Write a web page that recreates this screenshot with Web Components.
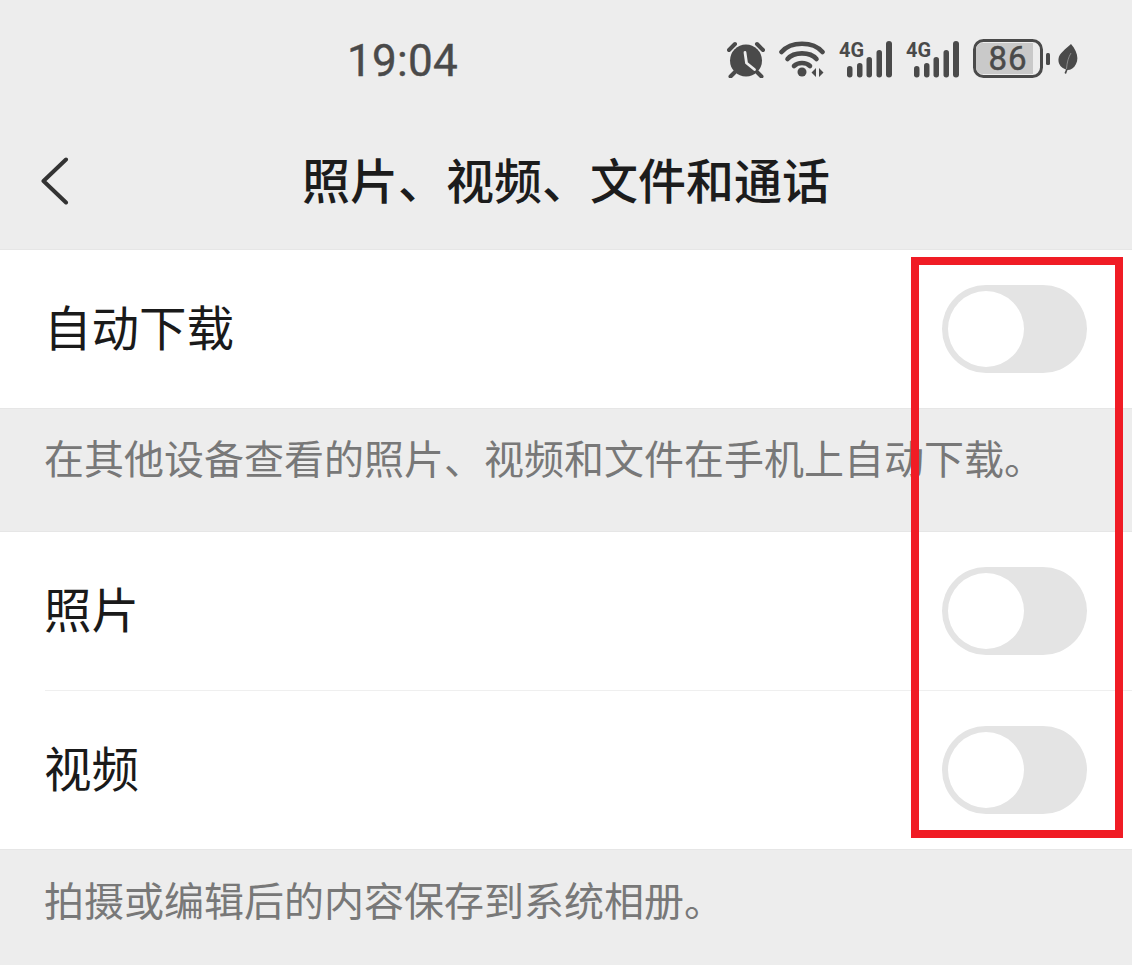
<!DOCTYPE html>
<html lang="zh">
<head>
<meta charset="utf-8">
<title>照片、视频、文件和通话</title>
<style>
  html, body { margin: 0; padding: 0; }
  body {
    width: 1132px; height: 965px; overflow: hidden; position: relative;
    background: #ededed;
    font-family: "Noto Sans CJK SC", "Noto Sans", sans-serif;
  }
  app-screen { display: block; }
</style>
</head>
<body>
<app-screen>
  <status-bar time="19:04"></status-bar>
  <nav-bar>照片、视频、文件和通话</nav-bar>
  <setting-group>
    <setting-row>自动下载</setting-row>
  </setting-group>
  <note-text size="large">在其他设备查看的照片、视频和文件在手机上自动下载。</note-text>
  <setting-group>
    <setting-row divider>照片</setting-row>
    <setting-row>视频</setting-row>
  </setting-group>
  <note-text>拍摄或编辑后的内容保存到系统相册。</note-text>
</app-screen>
<highlight-box></highlight-box>

<script>
function define(name, css, html, extra) {
  class El extends HTMLElement {
    constructor() {
      super();
      const root = this.attachShadow({ mode: 'open' });
      root.innerHTML = '<style>' + css + '</style>' + html;
      if (extra) extra(this, root);
    }
  }
  customElements.define(name, El);
}

const signal = `<svg class="sig" width="53" height="43" viewBox="0 -6 53 43" fill="#4a4a4a">
  <text x="0" y="15.500" font-family="Roboto, sans-serif" font-weight="700" font-size="20" textLength="25" lengthAdjust="spacingAndGlyphs">4G</text>
  <rect x="8" y="25" width="5.500" height="11.500" rx="2.700"/>
  <rect x="18" y="22" width="5.500" height="14.500" rx="2.700"/>
  <rect x="27.500" y="16" width="5.500" height="20.500" rx="2.700"/>
  <rect x="37.500" y="9" width="5.500" height="27.500" rx="2.700"/>
  <rect x="47" y="0" width="6" height="36.500" rx="3"/>
</svg>`;

define('status-bar', `
  :host { display: flex; align-items: center; height: 120px; padding: 0 54px 0 347px; box-sizing: border-box; color: #4a4a4a; }
  .time { font: 400 44px/1 Roboto, "Noto Sans", sans-serif; letter-spacing: .3px; margin-top: 2px; -webkit-text-stroke: .4px #4a4a4a; }
  .icons { margin-left: auto; display: flex; align-items: center; gap: 14px; margin-top: -2px; }
  svg { display: block; flex: none; }
  .sig { margin-top: -6px; }
  .leaf { margin-left: -6px; }
`, `
  <span class="time"></span>
  <div class="icons">
    <svg width="38" height="37" viewBox="0 0 38 37">
      <circle cx="19" cy="19.500" r="16" fill="#4a4a4a"/>
      <path d="M2 9 L8 3 M36 9 L30 3 M8 31 L3.500 35.500 M30 31 L34.500 35.500" stroke="#4a4a4a" stroke-width="4" stroke-linecap="round"/>
      <path d="M18 11.500 L19.500 22 L27.500 28.500" fill="none" stroke="#ededed" stroke-width="2.800" stroke-linecap="round" stroke-linejoin="round"/>
    </svg>
    <svg width="46" height="37" viewBox="0 0 46 37" fill="none" stroke="#4a4a4a" stroke-width="4.600" stroke-linecap="round">
      <path d="M2.500 11 C12 0 34 0 43.500 11"/>
      <path d="M8.500 18 C15 10.500 31 10.500 37.500 18"/>
      <path d="M15 25 C19 21 27 21 31 25"/>
      <circle cx="23" cy="31" r="4.500" fill="#4a4a4a" stroke="none"/>
      <path d="M37 27 L32.500 31.500 L37 36 Z M40 27 L44.500 31.500 L40 36 Z" fill="#4a4a4a" stroke="none"/>
    </svg>
    ${signal}
    ${signal}
    <svg width="77" height="40" viewBox="0 0 77 40">
      <rect x="1.500" y="1.500" width="67" height="36" rx="9" fill="#ededed" stroke="#4a4a4a" stroke-width="3"/>
      <path d="M9 4 H60 V35 H9 A6 6 0 0 1 3 29 V10 A6 6 0 0 1 9 4 Z" fill="#c9c9c9"/>
      <text x="35" y="31" text-anchor="middle" font-family="Roboto, sans-serif" font-weight="400" font-size="33" letter-spacing="1" stroke="#4a4a4a" stroke-width=".5" fill="#4a4a4a">86</text>
      <rect x="73" y="14" width="4" height="12" rx="1.500" fill="#4a4a4a"/>
    </svg>
    <svg class="leaf" width="20" height="30" viewBox="0 0 20 30">
      <path d="M13 0 C19 7 21 14 18 20 C16 24 13 26 9.500 26 L8 30 L6.500 29 L8 25.500 C3 24 0 20 0.500 15 C1 9 8 5 13 0 Z" fill="#4a4a4a"/>
      <path d="M8.500 25 C9 18 10.500 13 13 9" fill="none" stroke="#8a8a8a" stroke-width="1"/>
    </svg>
  </div>
`, (el, root) => { root.querySelector('.time').textContent = el.getAttribute('time'); });

define('nav-bar', `
  :host { display: flex; align-items: center; position: relative; height: 130px; box-sizing: border-box; padding-bottom: 13px; border-bottom: 1px solid #e6e6e6; color: #1c1c1c; }
  svg { position: absolute; left: 41px; top: 37px; }
  .title { flex: 1; text-align: center; font-size: 48px; font-weight: 500; line-height: 1; }
`, `
  <svg width="28" height="48" viewBox="0 0 28 48" fill="none" stroke="#333" stroke-width="4" stroke-linecap="round" stroke-linejoin="round"><path d="M25 2.500 L2.500 24 L25 45.500"/></svg>
  <div class="title"><slot></slot></div>
`);

define('setting-group', `:host { display: block; background: #fff; }`, `<slot></slot>`);

define('setting-row', `
  :host { display: block; padding-left: 45px; }
  .row { display: flex; align-items: center; justify-content: space-between; height: 158px; padding-right: 45px; box-sizing: border-box; font-size: 47.500px; color: #1a1a1a; }
  .label { line-height: 1; margin: -7px 0 0 -1px; }
  :host([divider]) .wrap { border-bottom: 1px solid #efefef; }
`, `<div class="wrap"><div class="row"><span class="label"><slot></slot></span><toggle-switch></toggle-switch></div></div>`);

define('toggle-switch', `
  :host { display: block; flex: none; width: 145px; height: 88px; border-radius: 44px; background: #e4e4e4; position: relative; }
  .knob { position: absolute; left: 5.500px; top: 6px; width: 76px; height: 76px; border-radius: 50%; background: #fff; }
`, `<div class="knob"></div>`);

define('note-text', `
  :host { display: block; box-sizing: border-box; height: 115px; padding: 25px 45px 0 44px; border-top: 1px solid #e6e6e6; font-size: 40px; line-height: 48px; color: #787878; white-space: nowrap; }
  :host([size="large"]) { height: 124px; padding-top: 24px; border-bottom: 1px solid #e6e6e6; }
`, `<slot></slot>`);

define('highlight-box', `
  :host { position: absolute; left: 911px; top: 257px; width: 212px; height: 581px; box-sizing: border-box; border: 8px solid #f01c25; }
`, ``);
</script>
</body>
</html>
